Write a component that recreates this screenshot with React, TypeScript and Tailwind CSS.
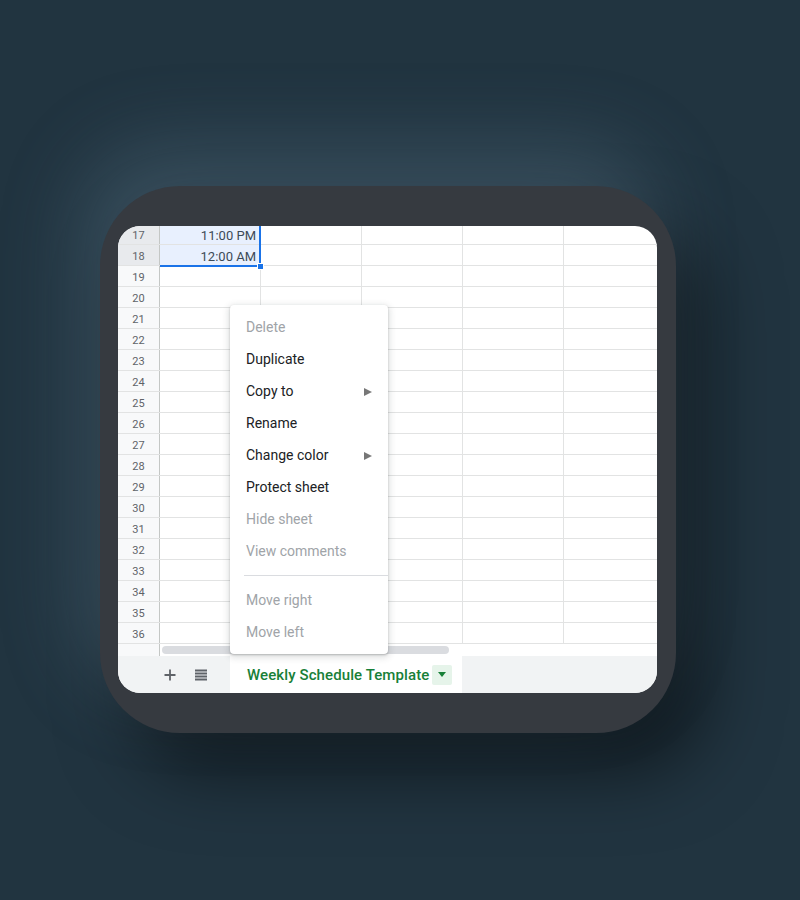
import React from 'react';

const rows = Array.from({ length: 20 }, (_, i) => 17 + i);
const cols = [0, 1, 2, 3, 4];

const values: Record<number, string> = {
  17: '11:00 PM',
  18: '12:00 AM',
};

type MenuItem = { label: string; disabled?: boolean; sub?: boolean } | 'sep';

const menu: MenuItem[] = [
  { label: 'Delete', disabled: true },
  { label: 'Duplicate' },
  { label: 'Copy to', sub: true },
  { label: 'Rename' },
  { label: 'Change color', sub: true },
  { label: 'Protect sheet' },
  { label: 'Hide sheet', disabled: true },
  { label: 'View comments', disabled: true },
  'sep',
  { label: 'Move right', disabled: true },
  { label: 'Move left', disabled: true },
];

const SheetGrid: React.FC = () => (
  <div className="relative h-[418px] overflow-hidden">
    <div className="-mt-[2px]">
      {rows.map((r) => {
        const selected = r === 17 || r === 18;
        return (
          <div key={r} className="flex h-[21px] border-b border-[#e2e3e3]">
            <div
              className={`w-[42px] shrink-0 border-r border-[#c4c7c5] text-center text-[11px] leading-[23px] text-[#5f6368] ${selected ? 'bg-[#e8eaed]' : 'bg-[#f8f9fa]'}`}
            >
              {r}
            </div>
            {cols.map((c) => (
              <div
                key={c}
                className={`w-[101px] shrink-0 border-r border-[#e2e3e3] pr-[4px] text-right text-[13px] leading-[23px] text-[#3c4a57] ${c === 0 && selected ? 'bg-[#e8f0fe]' : ''}`}
              >
                {c === 0 ? values[r] ?? '' : ''}
              </div>
            ))}
          </div>
        );
      })}
    </div>
    {/* selection outline */}
    <div className="pointer-events-none absolute left-[42px] top-0 h-[41px] w-[101px] border-b-2 border-r-2 border-[#1a73e8]" />
    <div className="absolute left-[139px] top-[37px] h-[7px] w-[7px] border border-white bg-[#1a73e8]" />
  </div>
);

const ContextMenu: React.FC = () => (
  <div className="absolute left-[112px] top-[79px] w-[158px] rounded-[4px] bg-white py-[6px] shadow-[0_2px_6px_2px_rgba(60,64,67,0.15),0_1px_2px_rgba(60,64,67,0.3)]">
    {menu.map((m, i) =>
      m === 'sep' ? (
        <div key={i} className="flex h-[17px] items-center pl-[14px]">
          <div className="h-px w-full bg-[#dadce0]" />
        </div>
      ) : (
        <div
          key={i}
          className={`flex h-[32px] items-center justify-between pl-[16px] pr-[16px] pt-[1px] text-[14px] ${m.disabled ? 'text-[#a0a4a8]' : 'text-[#202124]'}`}
        >
          <span>{m.label}</span>
          {m.sub && (
            <svg width="8" height="8" viewBox="0 0 8 8" className="text-[#777]">
              <path d="M0 0 L8 4 L0 8 Z" fill="currentColor" />
            </svg>
          )}
        </div>
      ),
    )}
  </div>
);

const BottomBar: React.FC = () => (
  <div className="flex h-[37px] items-stretch bg-[#f1f3f4]">
    <div className="flex w-[112px] shrink-0 items-center pl-[45px] gap-[17px] text-[#5f6368]">
      <svg width="14" height="14" viewBox="0 0 14 14">
        <path d="M7 1.5v11M1.5 7h11" stroke="currentColor" strokeWidth="1.8" />
      </svg>
      <svg width="14" height="14" viewBox="0 0 14 14">
        <path d="M1 2.5h12M1 5.5h12M1 8.5h12M1 11.5h12" stroke="currentColor" strokeWidth="1.8" />
      </svg>
    </div>
    <div className="flex w-[232px] items-center bg-white pl-[17px]">
      <span className="pt-[1px] text-[15px] font-medium tracking-[0.1px] text-[#188038]">
        Weekly Schedule Template
      </span>
      <div className="ml-[3px] flex h-[20px] w-[20px] items-center justify-center rounded-[2px] bg-[#e6f4ea]">
        <svg width="8" height="5" viewBox="0 0 8 5">
          <path d="M0 0h8L4 5z" fill="#188038" />
        </svg>
      </div>
    </div>
  </div>
);

export default function App() {
  return (
    <div
      className="h-[900px] w-[800px] overflow-hidden bg-[#213440] pl-[100px] pt-[186px]"
      style={{ fontFamily: 'Roboto, "Liberation Sans", sans-serif' }}
    >
      <div className="h-[547px] w-[576px] rounded-[80px] bg-[#363a40] px-[18px] pt-[40px] shadow-[-20px_-40px_80px_rgba(110,140,160,0.3),30px_40px_70px_rgba(0,0,0,0.5)]">
        <div className="relative h-[467px] w-[539px] overflow-hidden rounded-[22px] bg-white">
          <SheetGrid />
          <div className="flex h-[12px] items-center">
            <div className="h-full w-[42px] shrink-0 border-r border-[#c4c7c5] bg-[#f8f9fa]" />
            <div className="ml-[2px] h-[8px] w-[287px] rounded-full bg-[#dadce0]" />
          </div>
          <BottomBar />
          <ContextMenu />
        </div>
      </div>
    </div>
  );
}
